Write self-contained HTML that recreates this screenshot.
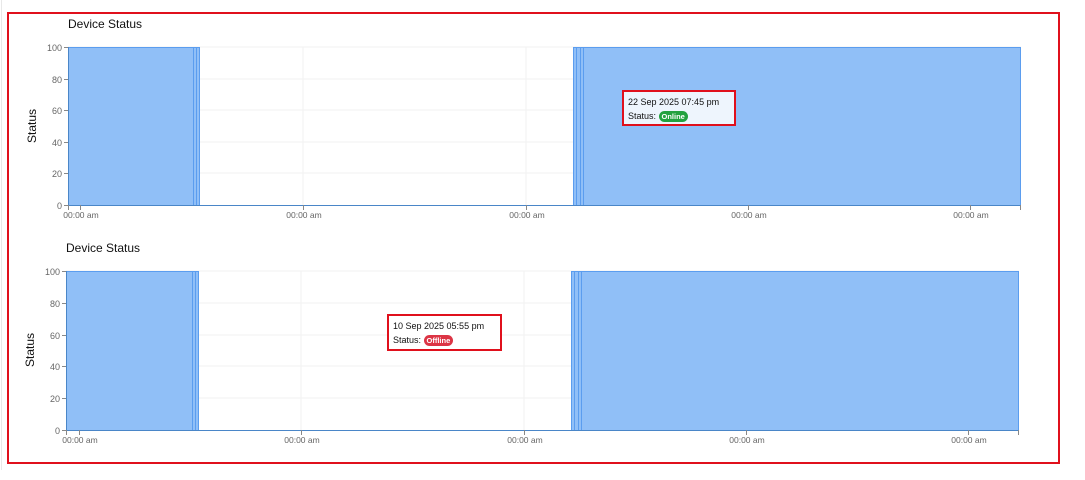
<!DOCTYPE html>
<html><head><meta charset="utf-8"><style>
html,body{margin:0;padding:0;background:#fff;width:1085px;height:480px;overflow:hidden}
svg{display:block;font-family:"Liberation Sans",sans-serif}
.tt{position:absolute;border:2px solid #e0101c;font-family:"Liberation Sans",sans-serif;font-size:9px;color:#111;padding:3px 4px;line-height:14px;box-sizing:border-box}
.b{display:inline-block;color:#fff;font-weight:bold;font-size:7.5px;border-radius:6px;padding:0 3px;line-height:11px;vertical-align:middle}
</style></head><body>
<svg width="1085" height="480" viewBox="0 0 1085 480">
<line x1="1.5" y1="0" x2="1.5" y2="470" stroke="#e8e8e8"/>
<rect x="8" y="13" width="1051" height="450" fill="none" stroke="#e0101c" stroke-width="2"/>
<g id="c1">
<text x="68" y="28" font-size="12" fill="#111">Device Status</text>
<g stroke="#f2f2f2"><line x1="68" y1="47" x2="1021" y2="47"/><line x1="68" y1="79" x2="1021" y2="79"/><line x1="68" y1="110" x2="1021" y2="110"/><line x1="68" y1="142" x2="1021" y2="142"/><line x1="68" y1="173" x2="1021" y2="173"/>
<line x1="303" y1="47" x2="303" y2="205"/><line x1="526" y1="47" x2="526" y2="205"/><line x1="748" y1="47" x2="748" y2="205"/><line x1="970" y1="47" x2="970" y2="205"/></g>
<rect x="68" y="47" width="132" height="158" fill="#90bff7"/>
<rect x="573" y="47" width="448" height="158" fill="#90bff7"/>
<g stroke="#5b9def" stroke-width="1"><line x1="68.5" y1="47" x2="68.5" y2="205"/><line x1="68" y1="47.5" x2="200" y2="47.5"/><line x1="193.5" y1="47" x2="193.5" y2="205"/><line x1="196.5" y1="47" x2="196.5" y2="205"/><line x1="199.5" y1="47" x2="199.5" y2="205"/>
<line x1="573" y1="47.5" x2="1021" y2="47.5"/><line x1="573.5" y1="47" x2="573.5" y2="205"/><line x1="576.5" y1="47" x2="576.5" y2="205"/><line x1="580.5" y1="47" x2="580.5" y2="205"/><line x1="583.5" y1="47" x2="583.5" y2="205"/><line x1="1020.5" y1="47" x2="1020.5" y2="205"/></g>
<line x1="68" y1="205.5" x2="1021" y2="205.5" stroke="#4a86c8"/>
<line x1="68.5" y1="47" x2="68.5" y2="206" stroke="#4a86c8"/>
<g stroke="#888"><line x1="64" y1="47.5" x2="68" y2="47.5"/><line x1="64" y1="79.5" x2="68" y2="79.5"/><line x1="64" y1="110.5" x2="68" y2="110.5"/><line x1="64" y1="142.5" x2="68" y2="142.5"/><line x1="64" y1="173.5" x2="68" y2="173.5"/><line x1="64" y1="205.5" x2="68" y2="205.5"/>
<line x1="80.5" y1="205" x2="80.5" y2="210"/><line x1="303.5" y1="205" x2="303.5" y2="210"/><line x1="526.5" y1="205" x2="526.5" y2="210"/><line x1="748.5" y1="205" x2="748.5" y2="210"/><line x1="970.5" y1="205" x2="970.5" y2="210"/><line x1="1020.5" y1="205" x2="1020.5" y2="210"/><line x1="68.5" y1="205" x2="68.5" y2="210"/></g>
<g font-size="9" fill="#666" text-anchor="end"><text x="62" y="51">100</text><text x="62" y="83">80</text><text x="62" y="114">60</text><text x="62" y="146">40</text><text x="62" y="177">20</text><text x="62" y="209">0</text></g>
<g font-size="8.5" fill="#666" text-anchor="middle"><text x="81" y="218">00:00 am</text><text x="304" y="218">00:00 am</text><text x="527" y="218">00:00 am</text><text x="749" y="218">00:00 am</text><text x="971" y="218">00:00 am</text></g>
<text transform="translate(36,126) rotate(-90)" font-size="12" fill="#111" text-anchor="middle">Status</text>
</g>
<g id="c2">
<text x="66" y="252" font-size="12" fill="#111">Device Status</text>
<g stroke="#f2f2f2"><line x1="66" y1="271" x2="1019" y2="271"/><line x1="66" y1="303" x2="1019" y2="303"/><line x1="66" y1="335" x2="1019" y2="335"/><line x1="66" y1="366" x2="1019" y2="366"/><line x1="66" y1="398" x2="1019" y2="398"/>
<line x1="301" y1="271" x2="301" y2="430"/><line x1="524" y1="271" x2="524" y2="430"/><line x1="746" y1="271" x2="746" y2="430"/><line x1="968" y1="271" x2="968" y2="430"/></g>
<rect x="66" y="271" width="133" height="159" fill="#90bff7"/>
<rect x="571" y="271" width="448" height="159" fill="#90bff7"/>
<g stroke="#5b9def" stroke-width="1"><line x1="66.5" y1="271" x2="66.5" y2="430"/><line x1="66" y1="271.5" x2="199" y2="271.5"/><line x1="192.5" y1="271" x2="192.5" y2="430"/><line x1="195.5" y1="271" x2="195.5" y2="430"/><line x1="198.5" y1="271" x2="198.5" y2="430"/>
<line x1="571" y1="271.5" x2="1019" y2="271.5"/><line x1="571.5" y1="271" x2="571.5" y2="430"/><line x1="574.5" y1="271" x2="574.5" y2="430"/><line x1="578.5" y1="271" x2="578.5" y2="430"/><line x1="581.5" y1="271" x2="581.5" y2="430"/><line x1="1018.5" y1="271" x2="1018.5" y2="430"/></g>
<line x1="66" y1="430.5" x2="1019" y2="430.5" stroke="#4a86c8"/>
<line x1="66.5" y1="271" x2="66.5" y2="431" stroke="#4a86c8"/>
<g stroke="#888"><line x1="62" y1="271.5" x2="66" y2="271.5"/><line x1="62" y1="303.5" x2="66" y2="303.5"/><line x1="62" y1="335.5" x2="66" y2="335.5"/><line x1="62" y1="366.5" x2="66" y2="366.5"/><line x1="62" y1="398.5" x2="66" y2="398.5"/><line x1="62" y1="430.5" x2="66" y2="430.5"/>
<line x1="79.5" y1="430" x2="79.5" y2="435"/><line x1="301.5" y1="430" x2="301.5" y2="435"/><line x1="524.5" y1="430" x2="524.5" y2="435"/><line x1="746.5" y1="430" x2="746.5" y2="435"/><line x1="968.5" y1="430" x2="968.5" y2="435"/><line x1="1018.5" y1="430" x2="1018.5" y2="435"/><line x1="66.5" y1="430" x2="66.5" y2="435"/></g>
<g font-size="9" fill="#666" text-anchor="end"><text x="60" y="275">100</text><text x="60" y="307">80</text><text x="60" y="339">60</text><text x="60" y="370">40</text><text x="60" y="402">20</text><text x="60" y="434">0</text></g>
<g font-size="8.5" fill="#666" text-anchor="middle"><text x="80" y="443">00:00 am</text><text x="302" y="443">00:00 am</text><text x="525" y="443">00:00 am</text><text x="747" y="443">00:00 am</text><text x="969" y="443">00:00 am</text></g>
<text transform="translate(34,350) rotate(-90)" font-size="12" fill="#111" text-anchor="middle">Status</text>
</g>
</svg>
<div class="tt" style="left:622px;top:90px;width:114px;height:36px;background:#eef5fd">22 Sep 2025 07:45 pm<br>Status: <span class="b" style="background:#22a13f">Online</span></div>
<div class="tt" style="left:387px;top:314px;width:115px;height:37px;background:#fff">10 Sep 2025 05:55 pm<br>Status: <span class="b" style="background:#dc3545">Offline</span></div>
</body></html>
